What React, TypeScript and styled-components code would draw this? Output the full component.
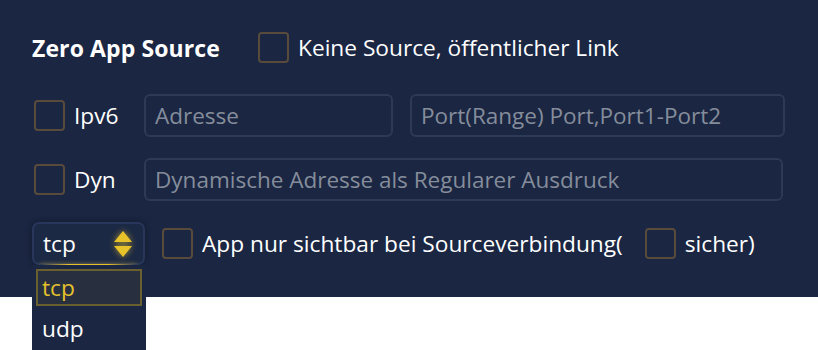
import React from "react";
import styled, { createGlobalStyle } from "styled-components";

const Global = createGlobalStyle`
  html, body { margin: 0; padding: 0; background: #ffffff; }
  body { font-family: "Open Sans", "Noto Sans", sans-serif; }
`;

const Page = styled.div`
  min-height: 350px;
  background: #ffffff;
`;

const Panel = styled.div`
  position: relative;
  background: #1a2642;
  height: 297px;
  box-sizing: border-box;
  padding: 26px 32px 0 32px;
  display: flex;
  flex-direction: column;
  color: #ffffff;
  font-size: 22.7px;
`;

const Row = styled.div<{ $mb?: number }>`
  display: flex;
  align-items: center;
  height: 43px;
  margin-bottom: ${(p) => p.$mb ?? 21}px;
`;

const Title = styled.div`
  font-weight: 700;
  font-size: 23px;
  width: 226px;
  letter-spacing: 0.1px;
`;

const Check = styled.label<{ $ml?: number; $w?: number }>`
  display: flex;
  align-items: center;
  gap: 9px;
  margin-left: ${(p) => p.$ml ?? 0}px;
  ${(p) => (p.$w ? `width: ${p.$w}px;` : "")}
  flex-shrink: 0;
  white-space: nowrap;
`;

const Box = styled.span`
  width: 27px;
  height: 27px;
  border: 2px solid #594b3c;
  border-radius: 4px;
  flex-shrink: 0;
`;

const Input = styled.input<{ $w: number; $ml?: number }>`
  width: ${(p) => p.$w}px;
  height: 43px;
  box-sizing: border-box;
  margin-left: ${(p) => p.$ml ?? 0}px;
  background: transparent;
  border: 2px solid #2d3a57;
  border-radius: 6px;
  padding: 0 9px;
  font-family: "Open Sans", "Noto Sans", sans-serif;
  font-size: 22.5px;
  color: #ffffff;
  outline: none;
  &::placeholder { color: #858d9b; }
`;

const SelectWrap = styled.div`
  position: relative;
  width: 113px;
  height: 43px;
  flex-shrink: 0;
`;

const SelectBox = styled.div`
  box-sizing: border-box;
  width: 100%;
  height: 100%;
  border: 2px solid #27365a;
  border-radius: 7px;
  background: #1c2945;
  display: flex;
  align-items: center;
  justify-content: space-between;
  padding: 0 10px 0 9px;
  box-shadow: 0 0 6px rgba(0, 0, 0, 0.35);
  &::after {
    content: "";
    position: absolute;
    left: 8px;
    right: 8px;
    bottom: -1px;
    height: 2px;
    background: linear-gradient(90deg, rgba(232,194,42,0) 0%, #e8c22a 30%, #e8c22a 70%, rgba(232,194,42,0) 100%);
    box-shadow: 0 0 4px rgba(232,194,42,0.6);
  }
`;

const Arrows = styled.svg`
  filter: drop-shadow(0 0 3px rgba(232, 194, 42, 0.7));
`;

const List = styled.div`
  position: absolute;
  top: 43px;
  left: 0;
  width: 114px;
  height: 90px;
  background: #1a2642;
  box-sizing: border-box;
  padding: 4px;
  display: flex;
  flex-direction: column;
  gap: 4px;
  z-index: 2;
`;

const Option = styled.div<{ $active?: boolean }>`
  height: 37px;
  flex-shrink: 0;
  box-sizing: border-box;
  display: flex;
  align-items: center;
  padding-left: 4px;
  color: ${(p) => (p.$active ? "#e4c12c" : "#ffffff")};
  border: 2px solid ${(p) => (p.$active ? "#6a5f2f" : "transparent")};
  background: ${(p) => (p.$active ? "#28303f" : "transparent")};
`;

export default function App() {
  return (
    <Page>
      <Global />
      <Panel>
        <Row $mb={25}>
          <Title>Zero App Source</Title>
          <Check>
            <Box />
            Keine Source, öffentlicher Link
          </Check>
        </Row>
        <Row>
          <Check $ml={2} $w={110}>
            <Box />
            Ipv6
          </Check>
          <Input $w={249} placeholder="Adresse" />
          <Input $w={375} $ml={17} placeholder="Port(Range) Port,Port1-Port2" />
        </Row>
        <Row>
          <Check $ml={2} $w={110}>
            <Box />
            Dyn
          </Check>
          <Input $w={639} placeholder="Dynamische Adresse als Regularer Ausdruck" />
        </Row>
        <Row>
          <SelectWrap>
            <SelectBox>
              <span>tcp</span>
              <Arrows width="20" height="28" viewBox="0 0 20 28">
                <path d="M10 1 L19 12 L1 12 Z" fill="#e8c22a" />
                <path d="M1 16 L19 16 L10 27 Z" fill="#e8c22a" />
              </Arrows>
            </SelectBox>
            <List>
              <Option $active>tcp</Option>
              <Option>udp</Option>
            </List>
          </SelectWrap>
          <Check $ml={17}>
            <Box />
            App nur sichtbar bei Sourceverbindung(
          </Check>
          <Check $ml={22}>
            <Box />
            sicher)
          </Check>
        </Row>
      </Panel>
    </Page>
  );
}
